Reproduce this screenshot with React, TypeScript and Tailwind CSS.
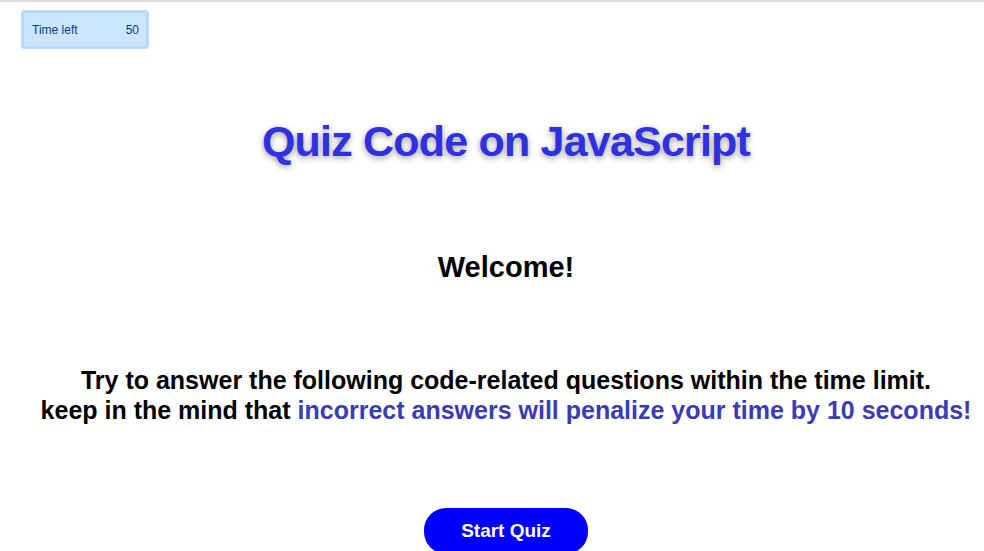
export default function App() {
  return (
    <div className="min-h-[551px] bg-white font-['Liberation_Sans',Arial,sans-serif] border-t-2 border-[#dedede] overflow-hidden">
      <div className="pl-[21px] pt-2">
        <div className="w-[128px] h-[39px] rounded-[4px] border-[3px] border-[#b8daff] bg-[#cce5ff] text-[#004085] text-[12px] flex items-center justify-between pl-[8px] pr-[7px]">
          <span>Time left</span>
          <span>50</span>
        </div>
      </div>

      <div className="pl-[28px] flex flex-col items-center text-center">
        <h1 className="mt-[64px] text-[43px] leading-[56px] font-bold text-[#3030e0] tracking-[-0.8px] [text-shadow:0_2px_6px_rgba(0,0,0,0.4)]">
          Quiz Code on JavaScript
        </h1>

        <h2 className="mt-[80px] text-[29px] leading-[36px] font-bold text-black">Welcome!</h2>

        <p className="mt-[80px] text-[25px] leading-[30px] font-bold text-black">
          Try to answer the following code-related questions within the time limit.
          <br />
          keep in the mind that <span className="text-[#3b3bb5]">incorrect answers will penalize your time by 10 seconds!</span>
        </p>

        <button className="mt-[83px] w-[164px] h-[46px] rounded-[22px] bg-[#0000ff] text-white text-[19px] font-bold">
          Start Quiz
        </button>
      </div>
    </div>
  );
}
